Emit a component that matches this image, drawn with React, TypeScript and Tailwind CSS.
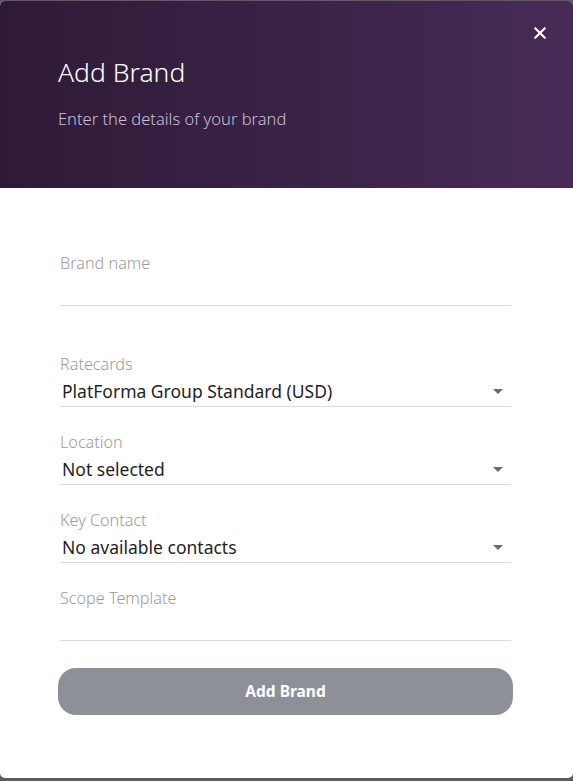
import { IoClose } from "react-icons/io5";

const fields = [
  { label: "Brand name", value: "", select: false },
  { label: "Ratecards", value: "PlatForma Group Standard (USD)", select: true },
  { label: "Location", value: "Not selected", select: true },
  { label: "Key Contact", value: "No available contacts", select: true },
  { label: "Scope Template", value: "", select: false },
];

const App = () => {
  return (
    <div className="h-[781px] w-full bg-[#5f5a63] pt-[1px] font-['Noto_Sans',sans-serif]">
      <div className="flex h-[777px] flex-col overflow-hidden rounded-[5px] bg-white">
        <div className="relative h-[187px] bg-gradient-to-r from-[#2e1a37] to-[#472b56] px-[58px] pt-[54px]">
          <button className="absolute right-[22px] top-[21px] text-white">
            <IoClose size={22} />
          </button>
          <h1 className="text-[26.5px] font-light leading-[34px] text-white">Add Brand</h1>
          <p className="mt-[19px] text-[16.5px] font-light leading-[22px] text-[#cbbfd1]">
            Enter the details of your brand
          </p>
        </div>
        <form className="flex flex-col pl-[60px] pr-[62px] pt-[65px]">
          {fields.map((f, i) => (
            <div
              key={f.label}
              className={i === 0 ? "mb-[48px]" : i === fields.length - 1 ? "mb-[27px]" : "mb-[25px]"}
            >
              <div className="text-[16.2px] font-light leading-[20px] text-[#9b9b9b]">{f.label}</div>
              <div className="flex h-[33px] items-center justify-between border-b border-[#dcdcdc] pl-[2px] pr-[8px] pt-[2px]">
                <span className="text-[17.5px] leading-[22px] text-[#1f1f1f]">{f.value}</span>
                {f.select && (
                  <svg width="10" height="5" viewBox="0 0 10 5">
                    <path d="M0 0h10L5 5z" fill="#6b6b6b" />
                  </svg>
                )}
              </div>
            </div>
          ))}
          <button
            type="submit"
            className="-mx-[2px] h-[47px] rounded-[18px] bg-[#8e9097] text-[15.5px] font-bold text-white"
          >
            Add Brand
          </button>
        </form>
      </div>
    </div>
  );
};

export default App;
